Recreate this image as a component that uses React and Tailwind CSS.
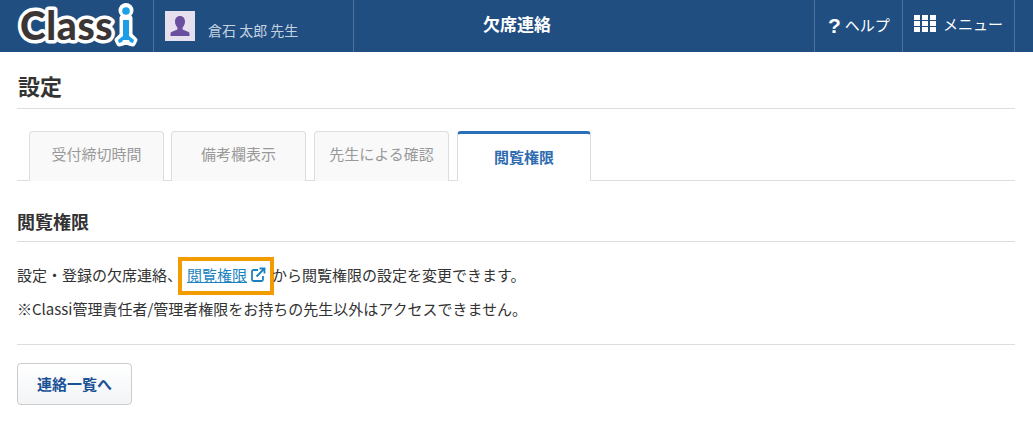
import React from "react";

const font = { fontFamily: '"Noto Sans CJK JP", sans-serif' };

function Logo() {
  return (
    <svg width="153" height="52" viewBox="0 0 153 52" className="shrink-0">
      <text x="20" y="40" fontFamily="Lato, sans-serif" fontWeight="900" fontSize="39" letterSpacing="0.6" fill="#3c3535" stroke="#fff" strokeWidth="7" strokeLinejoin="round" paintOrder="stroke">Class</text>
      <circle cx="126" cy="10.500" r="7.500" fill="#fff" />
      <path d="M122 18h8v17l5 5-2 4-4-1-3-1-3 1-4 1-2-4 5-5z" fill="#fff" stroke="#fff" strokeWidth="5" strokeLinejoin="round" />
      <circle cx="126" cy="11" r="3.800" fill="#1d9fe8" />
      <path d="M123 20h6v16l5 4-1 3-3-1-1-2h-6l-1 2-3 1-1-3 5-4z" fill="#1d9fe8" />
    </svg>
  );
}

function Tab({ children, className = "" }) {
  return (
    <div className={`w-[135px] h-[50px] mb-[-1px] border border-[#dddddd] border-b-0 rounded-t bg-[#f9f9f9] text-[#999999] text-[15px] flex items-center justify-center pb-[5px] ${className}`}>
      {children}
    </div>
  );
}

export default function App() {
  return (
    <div className="w-[1033px] h-[421px] bg-white text-[#333333] overflow-hidden" style={font}>
      <header className="h-[52px] bg-[#204e80] flex text-white overflow-hidden">
        <div className="w-[153px] flex items-center overflow-hidden">
          <Logo />
        </div>
        <div className="w-[200px] border-l border-[#4f7298] flex items-start pl-[11px] pt-[11px]">
          <div className="w-[30px] h-[30px] bg-[#e6e0ee] flex items-center justify-center">
            <svg width="22" height="22" viewBox="0 0 22 22">
              <path d="M11 1c3.200 0 5 2.400 5 5.600 0 2.400-1 4.600-2.400 5.900v2l5.400 2.200c1 .4 1.500 1.100 1.500 2.300v2H1.500v-2c0-1.200.5-1.900 1.500-2.300l5.400-2.200v-2C7 11.200 6 9 6 6.600 6 3.400 7.800 1 11 1z" fill="#6b4ea0" />
            </svg>
          </div>
          <span className="ml-[13px] mt-[9px] text-[14px] leading-[20px] text-[#c5d2e0] whitespace-nowrap">倉石 太郎 先生</span>
        </div>
        <div className="w-[461px] border-l border-[#4f7298] flex items-center pl-[129px] pb-[5px]">
          <span className="text-[17px] font-bold">欠席連絡</span>
        </div>
        <div className="w-[88px] border-l border-[#4f7298] flex items-center pl-[13px] pb-[2px] gap-[5px]">
          <span className="text-[21px] leading-none" style={{ fontFamily: '"Liberation Sans", sans-serif', fontWeight: 700 }}>?</span>
          <span className="text-[15px] whitespace-nowrap ml-[-1px]">ヘルプ</span>
        </div>
        <div className="w-[112px] border-l border-[#4f7298] flex items-center pl-[11px] pb-[3px] gap-[7px]">
          <svg width="22" height="17" viewBox="0 0 22 17" className="mb-[3px]">
            <g fill="#fff">
              <rect x="0" y="0" width="6" height="5" /><rect x="8" y="0" width="6" height="5" /><rect x="16" y="0" width="6" height="5" />
              <rect x="0" y="6" width="6" height="5" /><rect x="8" y="6" width="6" height="5" /><rect x="16" y="6" width="6" height="5" />
              <rect x="0" y="12" width="6" height="5" /><rect x="8" y="12" width="6" height="5" /><rect x="16" y="12" width="6" height="5" />
            </g>
          </svg>
          <span className="text-[15px] whitespace-nowrap">メニュー</span>
        </div>
        <div className="flex-1 border-l border-[#4f7298]" />
      </header>

      <main className="ml-[17px] w-[998px]">
        <h1 className="h-[57px] border-b border-[#dddddd] flex items-center pt-[10px] pl-[1px] text-[22px] font-bold leading-none">設定</h1>

        <div className="mt-[22px] h-[50px] border-b border-[#dddddd] flex pl-[12px] gap-[7px]">
          <Tab>受付締切時間</Tab>
          <Tab>備考欄表示</Tab>
          <Tab className="ml-[1px]">先生による確認</Tab>
          <div className="ml-[1px] w-[134px] h-[50px] mb-[-1px] border-x border-[#dddddd] border-t-[3px] border-t-[#2a6fba] rounded-t bg-white text-[#2f6bb0] font-bold text-[15px] flex items-center justify-center">
            閲覧権限
          </div>
        </div>

        <h2 className="mt-[29px] h-[32px] border-b border-[#dddddd] text-[18px] font-bold leading-[22px]">閲覧権限</h2>

        <p className="mt-[14px] h-[39px] flex items-center text-[15px] whitespace-nowrap">
          <span>設定・登録の欠席連絡、</span>
          <span className="ml-[-4px] h-[38px] w-[96px] border-[4px] border-[#f29c00] flex items-center pl-[5px] shrink-0">
            <span className="text-[#1a83bf] underline">閲覧権限</span>
            <svg width="16" height="16" viewBox="0 0 16 16" className="ml-[3px] mb-[2px] shrink-0" fill="none" stroke="#1a83bf" strokeWidth="1.800">
              <path d="M8 3H3.500C2.700 3 2 3.700 2 4.500v8C2 13.300 2.700 14 3.500 14h8c.8 0 1.500-.7 1.500-1.500V9" />
              <path d="M6.500 9.500 14 2M9.500 1.500h5v5" />
            </svg>
          </span>
          <span className="ml-[-2px]">から閲覧権限の設定を変更できます。</span>
        </p>

        <p className="h-[28px] flex items-center text-[15px] whitespace-nowrap">※Classi管理責任者/管理者権限をお持ちの先生以外はアクセスできません。</p>

        <div className="mt-[21px] border-t border-[#dddddd] pt-[18px]">
          <button className="w-[115px] h-[42px] border border-[#cccccc] rounded bg-gradient-to-b from-white to-[#f2f4f6] text-[#1a5296] text-[15px] font-bold flex items-center justify-center">
            連絡一覧へ
          </button>
        </div>
      </main>
    </div>
  );
}
